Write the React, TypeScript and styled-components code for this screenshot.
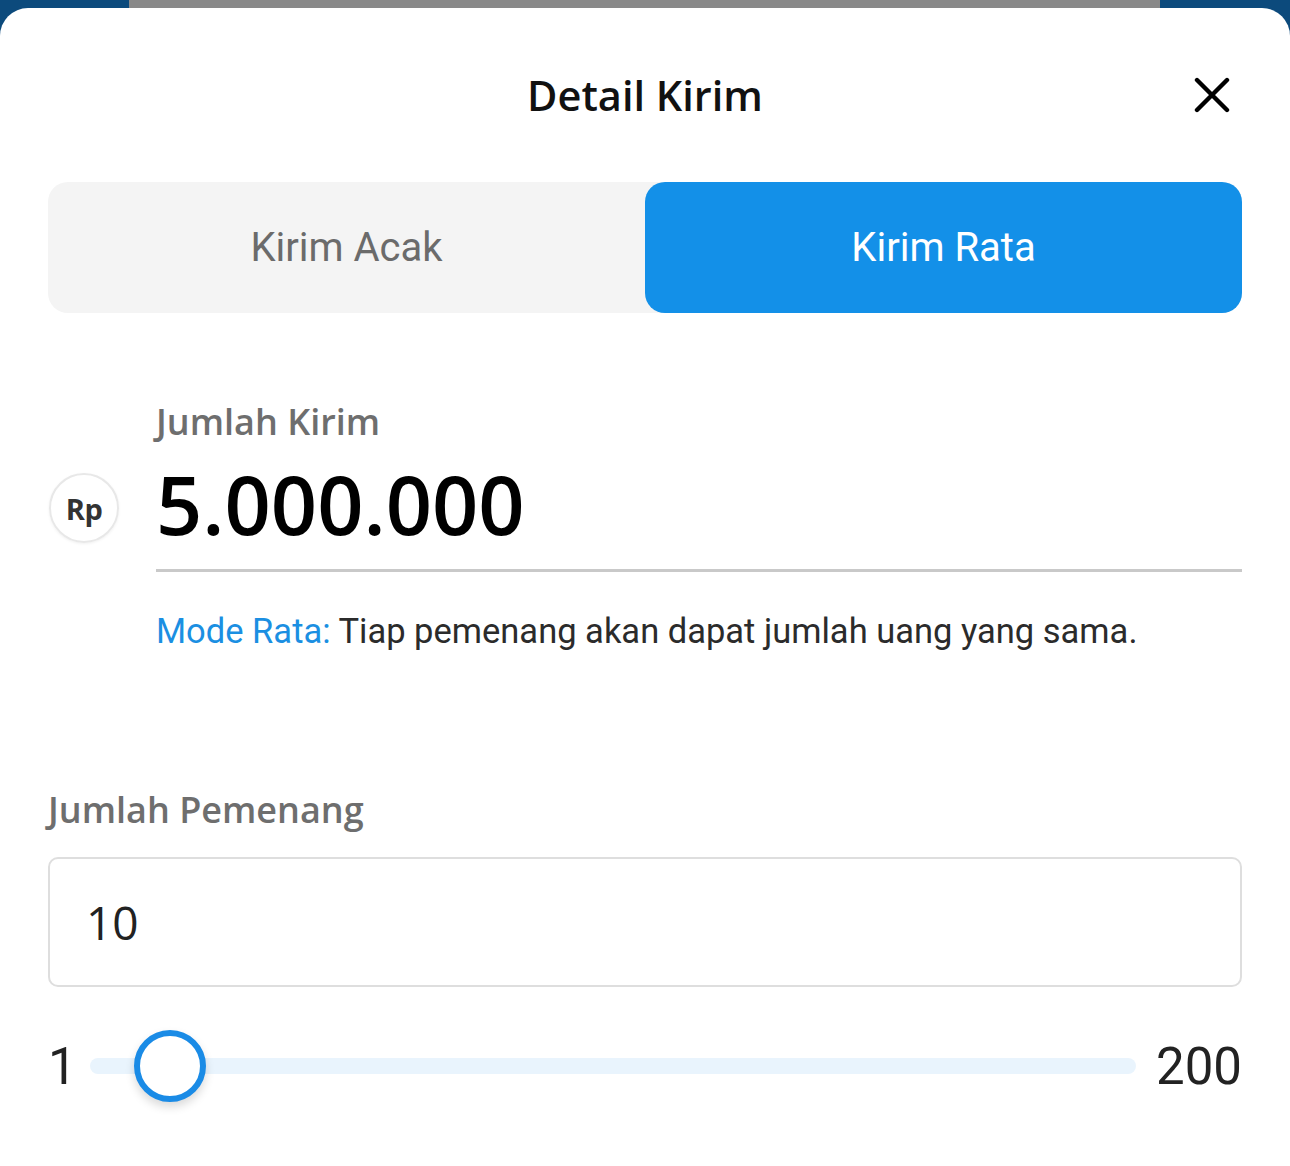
import React, { useState } from 'react';
import styled, { createGlobalStyle } from 'styled-components';

const GlobalStyle = createGlobalStyle`
  html, body {
    margin: 0;
    padding: 0;
    background: #0c4a7c;
  }
  * {
    box-sizing: border-box;
  }
`;

const MIN = 1;
const MAX = 200;

const App = () => {
  const [mode, setMode] = useState<'acak' | 'rata'>('rata');
  const [winners, setWinners] = useState(10);
  const pct = (winners - MIN) / (MAX - MIN);

  return (
    <>
      <GlobalStyle />
      <Screen>
        <Handle />
        <Sheet>
          <Header>
            <Title>Detail Kirim</Title>
            <CloseButton aria-label='close'>
              <svg width='36' height='36' viewBox='0 0 36 36'>
                <path d='M3 3 L33 33 M33 3 L3 33' stroke='#000' strokeWidth='4.4' strokeLinecap='round' fill='none' />
              </svg>
            </CloseButton>
          </Header>

          <Segmented>
            <Segment active={mode === 'acak'} onClick={() => setMode('acak')}>Kirim Acak</Segment>
            <Segment active={mode === 'rata'} onClick={() => setMode('rata')}>Kirim Rata</Segment>
          </Segmented>

          <AmountBlock>
            <Label>Jumlah Kirim</Label>
            <CurrencyBadge>Rp</CurrencyBadge>
            <Amount>5.000.000</Amount>
            <Underline />
            <Hint>
              <HintMode>Mode Rata:</HintMode> Tiap pemenang akan dapat jumlah uang yang sama.
            </Hint>
          </AmountBlock>

          <WinnerLabel>Jumlah Pemenang</WinnerLabel>
          <WinnerInput>{winners}</WinnerInput>

          <SliderRow>
            <RangeValue>{MIN}</RangeValue>
            <Track onClick={() => setWinners(10)}>
              <Thumb style={{ left: `calc(${pct} * (100% - 72px))` }} />
            </Track>
            <RangeValue>{MAX}</RangeValue>
          </SliderRow>
        </Sheet>
      </Screen>
    </>
  );
};

export default App;

const Screen = styled.div`
  min-height: 1166px;
  display: flex;
  flex-direction: column;
  background: #0c4a7c;
`;

const Handle = styled.div`
  height: 8px;
  margin: 0 130px 0 129px;
  background: #898989;
`;

const Sheet = styled.main`
  flex: 1;
  background: #fff;
  border-radius: 28px 28px 0 0;
  padding: 0 48px;
`;

const Header = styled.header`
  position: relative;
  height: 174px;
  display: flex;
  align-items: center;
  justify-content: center;
`;

const Title = styled.h1`
  margin: 0;
  font-family: 'Open Sans', sans-serif;
  font-weight: 600;
  font-size: 41.5px;
  color: #111;
`;

const CloseButton = styled.button`
  position: absolute;
  right: 12px;
  top: 50%;
  transform: translateY(-50%);
  display: flex;
  padding: 0;
  border: 0;
  background: none;
  cursor: pointer;
`;

const Segmented = styled.div`
  display: grid;
  grid-template-columns: 1fr 1fr;
  height: 131px;
  border-radius: 20px;
  background: #f4f4f4;
`;

const Segment = styled.button<{ active: boolean }>`
  border: 0;
  border-radius: 20px;
  background: ${({ active }) => (active ? '#1390e8' : 'transparent')};
  color: ${({ active }) => (active ? '#fff' : '#6b6b6b')};
  font-family: Roboto, sans-serif;
  font-size: 40px;
  cursor: pointer;
`;

const AmountBlock = styled.section`
  display: grid;
  grid-template-columns: 108px 1fr;
  margin-top: 86px;
`;

const Label = styled.div`
  grid-column: 2;
  font-family: 'Open Sans', sans-serif;
  font-weight: 600;
  font-size: 36px;
  line-height: 45px;
  color: #6e6e6e;
`;

const CurrencyBadge = styled.div`
  grid-column: 1;
  align-self: center;
  display: flex;
  align-items: center;
  justify-content: center;
  width: 70px;
  height: 70px;
  margin: 20px 0 0 1px;
  border: 2px solid #e8e8e8;
  border-radius: 50%;
  box-shadow: 0 1px 3px rgba(0, 0, 0, 0.06);
  font-family: 'Open Sans', sans-serif;
  font-weight: 700;
  font-size: 29px;
  letter-spacing: -0.5px;
  color: #333;
`;

const Amount = styled.div`
  grid-column: 2;
  margin-top: 12px;
  font-family: 'Open Sans', sans-serif;
  font-weight: 600;
  font-size: 81px;
  line-height: 96px;
  color: #000;
`;

const Underline = styled.div`
  grid-column: 2;
  height: 3px;
  margin-top: 17px;
  background: #c9c9c9;
`;

const Hint = styled.p`
  grid-column: 2;
  margin: 37px 0 0;
  font-family: Roboto, sans-serif;
  font-size: 34.5px;
  line-height: 44px;
  color: #2b2b2b;
`;

const HintMode = styled.span`
  color: #1b8fe2;
`;

const WinnerLabel = styled(Label)`
  margin-top: 134px;
`;

const WinnerInput = styled.div`
  display: flex;
  align-items: center;
  height: 130px;
  margin-top: 25px;
  padding: 0 36px;
  border: 2px solid #dedede;
  border-radius: 10px;
  font-family: 'Open Sans', sans-serif;
  font-size: 46px;
  color: #222;
`;

const SliderRow = styled.div`
  display: grid;
  grid-template-columns: 22px 1fr auto;
  align-items: center;
  gap: 20px;
  height: 80px;
  margin-top: 39px;
`;

const RangeValue = styled.span`
  font-family: Roboto, sans-serif;
  font-size: 51px;
  color: #222;
  white-space: nowrap;
`;

const Track = styled.div`
  position: relative;
  height: 16px;
  border-radius: 8px;
  background: #e9f4fd;
`;

const Thumb = styled.div`
  position: absolute;
  top: 50%;
  width: 72px;
  height: 72px;
  margin-top: -36px;
  border: 6px solid #1a8be6;
  border-radius: 50%;
  background: #fff;
  box-shadow: 0 5px 10px rgba(0, 0, 0, 0.15);
`;
